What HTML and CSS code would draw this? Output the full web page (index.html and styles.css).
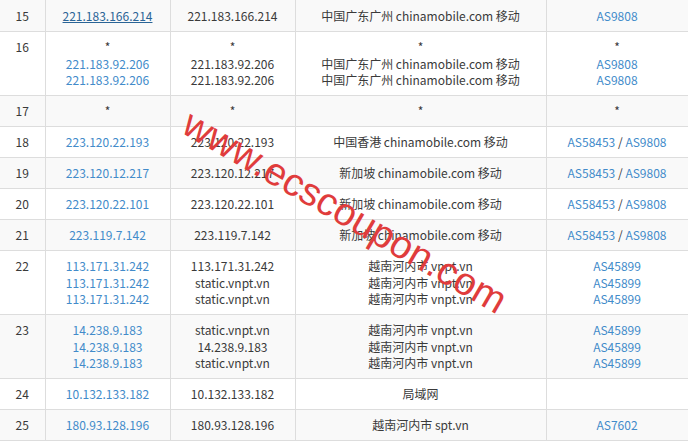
FILE: index.html
```html
<!DOCTYPE html>
<html lang="zh-CN">
<head>
    <meta charset="UTF-8">
    <meta name="viewport" content="width=device-width, initial-scale=1.0">
    <title>路由追踪</title>
    <link rel="stylesheet" href="styles.css">
</head>
<body>

    <div class="trace-wrap">
        <table class="trace-table">
            <colgroup>
                <col class="col-hop">
                <col class="col-ip">
                <col class="col-host">
                <col class="col-loc">
                <col class="col-as">
            </colgroup>
            <tbody>
                <tr>
                    <td>15</td>
                    <td><a href="#" class="active">221.183.166.214</a></td>
                    <td>221.183.166.214</td>
                    <td>中国广东广州 chinamobile.com 移动</td>
                    <td><a href="#">AS9808</a></td>
                </tr>
                <tr>
                    <td class="hop-top">16</td>
                    <td>*<br><a href="#">221.183.92.206</a><br><a href="#">221.183.92.206</a></td>
                    <td>*<br>221.183.92.206<br>221.183.92.206</td>
                    <td>*<br>中国广东广州 chinamobile.com 移动<br>中国广东广州 chinamobile.com 移动</td>
                    <td>*<br><a href="#">AS9808</a><br><a href="#">AS9808</a></td>
                </tr>
                <tr>
                    <td>17</td>
                    <td>*</td>
                    <td>*</td>
                    <td>*</td>
                    <td>*</td>
                </tr>
                <tr>
                    <td>18</td>
                    <td><a href="#">223.120.22.193</a></td>
                    <td>223.120.22.193</td>
                    <td>中国香港 chinamobile.com 移动</td>
                    <td><a href="#">AS58453</a> / <a href="#">AS9808</a></td>
                </tr>
                <tr>
                    <td>19</td>
                    <td><a href="#">223.120.12.217</a></td>
                    <td>223.120.12.217</td>
                    <td>新加坡 chinamobile.com 移动</td>
                    <td><a href="#">AS58453</a> / <a href="#">AS9808</a></td>
                </tr>
                <tr>
                    <td>20</td>
                    <td><a href="#">223.120.22.101</a></td>
                    <td>223.120.22.101</td>
                    <td>新加坡 chinamobile.com 移动</td>
                    <td><a href="#">AS58453</a> / <a href="#">AS9808</a></td>
                </tr>
                <tr>
                    <td>21</td>
                    <td><a href="#">223.119.7.142</a></td>
                    <td>223.119.7.142</td>
                    <td>新加坡 chinamobile.com 移动</td>
                    <td><a href="#">AS58453</a> / <a href="#">AS9808</a></td>
                </tr>
                <tr>
                    <td class="hop-top">22</td>
                    <td><a href="#">113.171.31.242</a><br><a href="#">113.171.31.242</a><br><a href="#">113.171.31.242</a></td>
                    <td>113.171.31.242<br>static.vnpt.vn<br>static.vnpt.vn</td>
                    <td>越南河内市 vnpt.vn<br>越南河内市 vnpt.vn<br>越南河内市 vnpt.vn</td>
                    <td><a href="#">AS45899</a><br><a href="#">AS45899</a><br><a href="#">AS45899</a></td>
                </tr>
                <tr>
                    <td class="hop-top">23</td>
                    <td><a href="#">14.238.9.183</a><br><a href="#">14.238.9.183</a><br><a href="#">14.238.9.183</a></td>
                    <td>static.vnpt.vn<br>14.238.9.183<br>static.vnpt.vn</td>
                    <td>越南河内市 vnpt.vn<br>越南河内市 vnpt.vn<br>越南河内市 vnpt.vn</td>
                    <td><a href="#">AS45899</a><br><a href="#">AS45899</a><br><a href="#">AS45899</a></td>
                </tr>
                <tr>
                    <td>24</td>
                    <td><a href="#">10.132.133.182</a></td>
                    <td>10.132.133.182</td>
                    <td>局域网</td>
                    <td></td>
                </tr>
                <tr>
                    <td>25</td>
                    <td><a href="#">180.93.128.196</a></td>
                    <td>180.93.128.196</td>
                    <td>越南河内市 spt.vn</td>
                    <td><a href="#">AS7602</a></td>
                </tr>
            </tbody>
        </table>

        <!-- 水印 -->
        <div class="watermark">www.ecscoupon.com</div>
    </div>

</body>
</html>
```

FILE: styles.css
```css
body {
    margin: 0;
    padding: 0;
    background-color: #ffffff;
    font-family: "Noto Sans CJK SC", "Noto Sans", sans-serif;
    font-size: 12px;
    color: #3a3a3a;
    overflow: hidden;
}
.trace-wrap {
    position: relative;
}
.trace-table {
    width: 688px;
    border-collapse: collapse;
    table-layout: fixed;
}
.col-hop { width: 45px; }
.col-ip { width: 125px; }
.col-host { width: 125px; }
.col-loc { width: 251px; }
.col-as { width: 142px; }
.trace-table td {
    border: 1px solid #dddddd;
    padding: 7px 4px 6.5px;
    line-height: 16.5px;
    text-align: center;
    vertical-align: middle;
    white-space: nowrap;
}
.trace-table tr:first-child td {
    border-top: none;
    padding-top: 8px;
}
.trace-table td:first-child {
    border-left: none;
}
.trace-table td.hop-top {
    vertical-align: top;
}
.trace-table tr:nth-child(odd) td {
    background-color: #f9f9f9;
}
.trace-table a {
    color: #428bca;
    text-decoration: none;
}
.trace-table a.active {
    color: #2a6496;
    text-decoration: underline;
}
/* 水印 */
.watermark {
    position: absolute;
    left: 345px;
    top: 212px;
    transform: translate(-50%, -50%) rotate(30deg);
    font-family: "Liberation Sans", Arial, sans-serif;
    font-size: 39px;
    color: #e03c3c;
    white-space: nowrap;
    pointer-events: none;
}
```
